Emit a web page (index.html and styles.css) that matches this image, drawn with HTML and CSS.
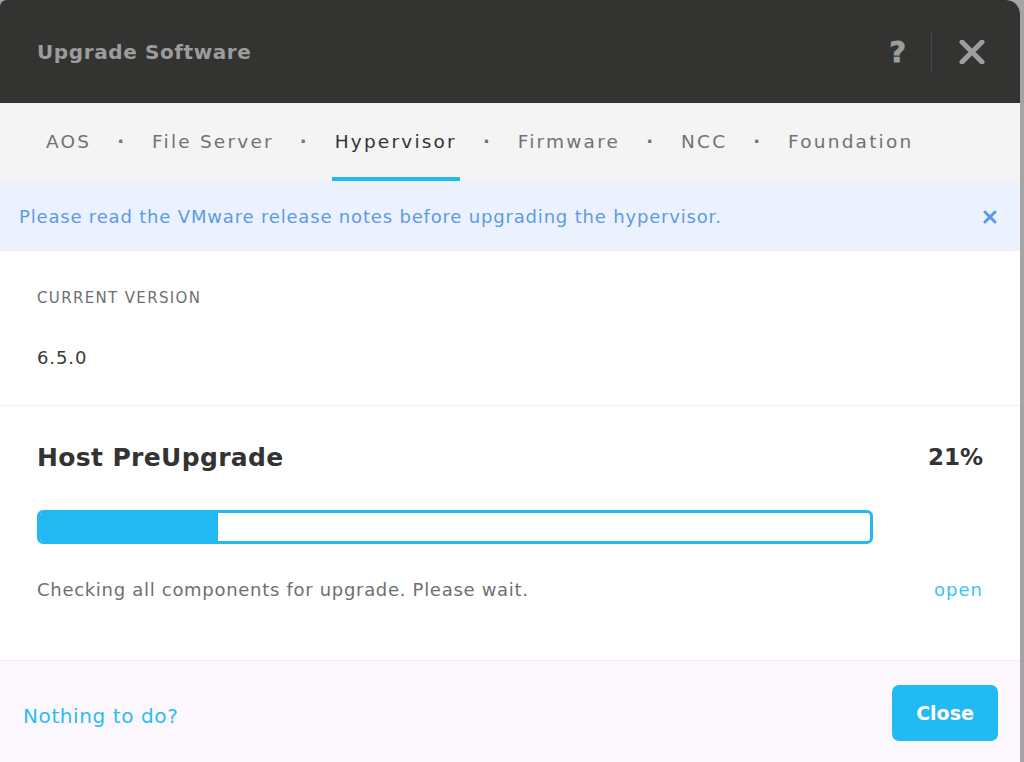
FILE: index.html
```html
<!DOCTYPE html>
<html>
<head>
<meta charset="utf-8">
<link rel="stylesheet" href="styles.css">
</head>
<body>
<div class="modal">
  <header class="head">
    <h1 class="title">Upgrade Software</h1>
    <div class="head-actions">
      <span class="help">?</span>
      <span class="sep"></span>
      <svg class="x" width="26" height="24" viewBox="0 0 26 24"><path d="M3 2 L23 22 M23 2 L3 22" stroke="#9d9d9d" stroke-width="5" stroke-linecap="round"/></svg>
    </div>
  </header>
  <nav class="tabs">
    <span class="tab">AOS</span><span class="dot">·</span>
    <span class="tab">File Server</span><span class="dot">·</span>
    <span class="tab active">Hypervisor</span><span class="dot">·</span>
    <span class="tab">Firmware</span><span class="dot">·</span>
    <span class="tab">NCC</span><span class="dot">·</span>
    <span class="tab">Foundation</span>
  </nav>
  <div class="notice">
    <span>Please read the VMware release notes before upgrading the hypervisor.</span>
    <svg class="nx" width="14" height="14" viewBox="0 0 14 14"><path d="M2 2 L12 12 M12 2 L2 12" stroke="#5b9be6" stroke-width="3" stroke-linecap="round"/></svg>
  </div>
  <section class="version">
    <div class="label">CURRENT VERSION</div>
    <div class="value">6.5.0</div>
  </section>
  <section class="progress">
    <div class="prow">
      <h2 class="ptitle">Host PreUpgrade</h2>
      <span class="pct">21%</span>
    </div>
    <div class="barrow">
      <div class="bar"><div class="fill" style="width:21.5%"></div></div>
    </div>
    <div class="srow">
      <span class="status">Checking all components for upgrade. Please wait.</span>
      <span class="open">open</span>
    </div>
  </section>
  <footer class="foot">
    <span class="nothing">Nothing to do?</span>
    <button class="close">Close</button>
  </footer>
</div>
</body>
</html>
```
FILE: styles.css
```css
* { box-sizing: border-box; }
html, body { margin: 0; padding: 0; }
body {
  background: #a4a4a4;
  width: 1024px;
  height: 762px;
  overflow: hidden;
  font-family: "DejaVu Sans", sans-serif;
}
.modal {
  width: 1020px;
  height: 762px;
  background: #ffffff;
  border-radius: 6px 14px 0 0;
  overflow: hidden;
  display: flex;
  flex-direction: column;
}
.head {
  height: 103px;
  flex: none;
  background: #333432;
  display: flex;
  align-items: center;
  justify-content: space-between;
  padding: 0 35px 0 37px;
}
.title {
  margin: 0;
  font-weight: 700;
  font-size: 20px;
  color: #9c9c9c;
  letter-spacing: 0.6px;
}
.head-actions {
  display: flex;
  align-items: center;
}
.help {
  font-weight: 700;
  font-size: 29px;
  color: #9d9d9d;
  margin-right: 25px;
  -webkit-text-stroke: 0.8px #9d9d9d;
}
.sep {
  width: 1px;
  height: 40px;
  background: #454a48;
  margin-right: 27px;
}
.x { display: block; }
.tabs {
  height: 78px;
  flex: none;
  background: #f4f4f4;
  display: flex;
  align-items: stretch;
  padding-left: 43px;
}
.tab {
  display: flex;
  align-items: center;
  padding: 2px 3px 0;
  font-size: 18.5px;
  letter-spacing: 2.2px;
  color: #707375;
  border-bottom: 4px solid transparent;
}
.tab.active {
  color: #333;
  border-bottom-color: #22b9f2;
}
.dot {
  display: flex;
  align-items: center;
  padding: 0 25px 2px 23px;
  font-size: 18px;
  font-weight: 700;
  color: #707375;
}
.notice {
  height: 70px;
  flex: none;
  background: #ecf2fd;
  display: flex;
  align-items: center;
  justify-content: space-between;
  padding: 1px 23px 0 19px;
  font-size: 18px;
  letter-spacing: 0.82px;
  color: #5b9be6;
}
.version {
  height: 155px;
  flex: none;
  border-bottom: 1px solid #efefef;
  padding: 38px 37px 0;
}
.label {
  font-size: 15px;
  letter-spacing: 1.35px;
  color: #6d7072;
}
.value {
  margin-top: 40px;
  font-size: 18px;
  letter-spacing: 0.9px;
  color: #3a3a3a;
}
.progress {
  height: 255px;
  flex: none;
  border-bottom: 1px solid #efefef;
  padding: 0 37px;
}
.prow {
  display: flex;
  justify-content: space-between;
  align-items: center;
  height: 102px;
}
.ptitle {
  margin: 0;
  font-size: 25px;
  letter-spacing: 0.35px;
  font-weight: 700;
  color: #333;
}
.pct {
  font-size: 23px;
  font-weight: 700;
  color: #333;
}
.barrow { padding: 2px 110px 0 0; }
.bar {
  height: 34px;
  border: 3px solid #22b9f2;
  border-radius: 6px;
  overflow: hidden;
  background: #fff;
}
.fill {
  height: 100%;
  background: #22b9f2;
}
.srow {
  margin-top: 35px;
  display: flex;
  justify-content: space-between;
  align-items: center;
  font-size: 18px;
  letter-spacing: 0.7px;
}
.status { color: #6d7072; }
.open { color: #3ec2f5; letter-spacing: 1px; }
.foot {
  flex: 1;
  background: #fcf7fc;
  display: flex;
  align-items: center;
  justify-content: space-between;
  padding: 0 22px 0 23px;
}
.nothing {
  font-size: 20px;
  letter-spacing: 0.6px;
  color: #2bbcf3;
  margin-top: 8px;
}
.close {
  width: 106px;
  height: 56px;
  border: none;
  border-radius: 7px;
  background: #22baf3;
  color: #fff;
  font-family: "DejaVu Sans", sans-serif;
  font-weight: 700;
  font-size: 19px;
  margin-top: 3px;
}
```
